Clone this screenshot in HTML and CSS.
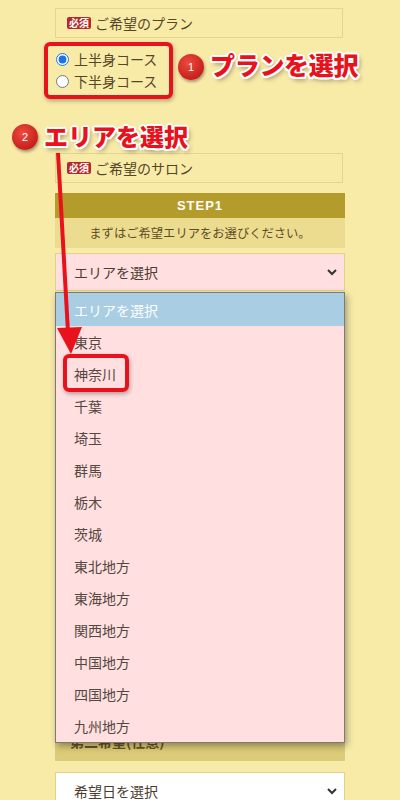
FILE: index.html
```html
<!DOCTYPE html>
<html lang="ja">
<head>
<meta charset="utf-8">
<link rel="stylesheet" href="styles.css">
</head>
<body>
<div class="form">
  <div class="label-box"><span class="badge">必須</span><span class="label-text">ご希望のプラン</span></div>
  <div class="radios">
    <label class="radio-row"><input type="radio" name="plan" checked><span>上半身コース</span></label>
    <label class="radio-row"><input type="radio" name="plan"><span>下半身コース</span></label>
  </div>
  <div class="label-box second"><span class="badge">必須</span><span class="label-text">ご希望のサロン</span></div>
  <div class="step-head">STEP1</div>
  <div class="step-sub">まずはご希望エリアをお選びください。</div>
  <div class="select pink">
    <span>エリアを選択</span>
    <svg class="chev" width="10" height="7" viewBox="0 0 10 7"><polyline points="1,1 5,5 9,1" fill="none" stroke="#333" stroke-width="2"/></svg>
  </div>
  <div class="wish-bar">第二希望(任意)</div>
  <div class="select white">
    <span>希望日を選択</span>
    <svg class="chev" width="10" height="7" viewBox="0 0 10 7"><polyline points="1,1 5,5 9,1" fill="none" stroke="#333" stroke-width="2"/></svg>
  </div>
</div>

<ul class="dropdown">
  <li class="hl">エリアを選択</li>
  <li>東京</li>
  <li>神奈川</li>
  <li>千葉</li>
  <li>埼玉</li>
  <li>群馬</li>
  <li>栃木</li>
  <li>茨城</li>
  <li>東北地方</li>
  <li>東海地方</li>
  <li>関西地方</li>
  <li>中国地方</li>
  <li>四国地方</li>
  <li>九州地方</li>
</ul>

<div class="mark mark-radios"></div>
<div class="mark mark-kanagawa"></div>
<div class="num num1">1</div>
<div class="callout callout1">プランを選択</div>
<div class="num num2">2</div>
<div class="callout callout2">エリアを選択</div>
<svg class="arrow" width="400" height="400" viewBox="0 0 400 400">
  <line x1="58" y1="153" x2="68" y2="332" stroke="#e8121c" stroke-width="4"/>
  <polygon points="57,328 82,327 71,354" fill="#e8121c"/>
</svg>
</body>
</html>
```
FILE: styles.css
```css
html, body {
  margin: 0;
  padding: 0;
}
body {
  background: #f8eba8;
  font-family: "Noto Sans CJK JP", "Noto Sans", sans-serif;
  color: #564629;
  width: 400px;
  height: 800px;
  overflow: hidden;
  position: relative;
}
.form {
  margin-left: 55px;
  width: 290px;
  padding-top: 8px;
}
.label-box {
  box-sizing: border-box;
  height: 30px;
  border: 1px solid #e3d48e;
  display: flex;
  align-items: center;
  padding-left: 11px;
  width: 288px;
}
.badge {
  background: #b3282a;
  color: #fff;
  font-size: 10px;
  font-weight: bold;
  line-height: 12px;
  padding: 0 2px;
  border-radius: 2px;
  margin-right: 4px;
  font-family: "Noto Sans CJK JP", serif;
}
.label-text {
  font-size: 14px;
}
.radios {
  margin-top: 10px;
  display: flex;
  flex-direction: column;
}
.radio-row {
  height: 22px;
  display: flex;
  align-items: center;
  font-size: 14px;
}
.radio-row input {
  margin: 0 5px 0 1px;
  width: 13px;
  height: 13px;
  accent-color: #1a73e8;
}
.label-box.second {
  margin-top: 61px;
}
.step-head {
  margin-top: 10px;
  height: 25px;
  background: #b39c2b;
  color: #fff;
  font-weight: bold;
  font-size: 13px;
  letter-spacing: 1px;
  display: flex;
  align-items: center;
  justify-content: center;
  font-family: "Liberation Sans", Arial, sans-serif;
}
.step-sub {
  height: 30px;
  background: #ecdc8f;
  font-size: 12.3px;
  display: flex;
  align-items: center;
  justify-content: center;
  color: #5e4d28;
}
.select {
  box-sizing: border-box;
  height: 38px;
  border: 1px solid #e2d18a;
  display: flex;
  align-items: center;
  justify-content: space-between;
  padding: 0 7px 0 18px;
  font-size: 14px;
  color: #4a3d2e;
}
.select.pink {
  margin-top: 5px;
  background: #ffdfe0;
}
.select.white {
  margin-top: 11px;
  background: #fff;
}
.wish-bar {
  margin-top: 430px;
  height: 40px;
  background: #dccb78;
  font-weight: bold;
  font-size: 14px;
  color: #6b5420;
  display: flex;
  align-items: center;
  padding-left: 15px;
}
.dropdown {
  position: absolute;
  left: 55px;
  top: 292px;
  width: 290px;
  box-sizing: border-box;
  margin: 0;
  padding: 0;
  list-style: none;
  background: #ffdfe0;
  border: 1px solid #7d7a76;
  box-shadow: 2px 3px 7px rgba(0, 0, 0, 0.35);
}
.dropdown li {
  height: 32px;
  display: flex;
  align-items: center;
  padding-left: 18px;
  font-size: 14px;
  color: #54473f;
}
.dropdown li.hl {
  height: 33px;
  background: #a9cde2;
  color: #fff;
}
.mark {
  position: absolute;
  box-sizing: border-box;
  border: 4px solid #e8121c;
  border-radius: 6px;
  box-shadow: 1px 2px 4px rgba(0, 0, 0, 0.3);
}
.mark-radios {
  left: 44px;
  top: 42px;
  width: 129px;
  height: 57px;
}
.mark-kanagawa {
  left: 63px;
  top: 354px;
  width: 66px;
  height: 38px;
}
.num {
  position: absolute;
  width: 26px;
  height: 26px;
  border-radius: 50%;
  background: radial-gradient(circle at 40% 35%, #ee4b3e, #c8201c 70%);
  color: #fff;
  font-size: 11px;
  display: flex;
  align-items: center;
  justify-content: center;
  font-family: "Liberation Sans", Arial, sans-serif;
  box-shadow: 1px 2px 3px rgba(0, 0, 0, 0.35);
}
.num1 {
  left: 178px;
  top: 54px;
}
.num2 {
  left: 12px;
  top: 124px;
}
.callout {
  position: absolute;
  color: #e8121c;
  font-weight: 900;
  line-height: 1;
  white-space: nowrap;
  text-shadow:
    2px 0 0 #fff, -2px 0 0 #fff, 0 2px 0 #fff, 0 -2px 0 #fff,
    1.5px 1.5px 0 #fff, -1.5px 1.5px 0 #fff, 1.5px -1.5px 0 #fff, -1.5px -1.5px 0 #fff,
    2px 3px 5px rgba(0, 0, 0, 0.45);
}
.callout1 {
  left: 210px;
  top: 52px;
  font-size: 25px;
  letter-spacing: -0.3px;
}
.callout2 {
  left: 44px;
  top: 124px;
  font-size: 24px;
}
.arrow {
  position: absolute;
  left: 0;
  top: 0;
  pointer-events: none;
}
```
